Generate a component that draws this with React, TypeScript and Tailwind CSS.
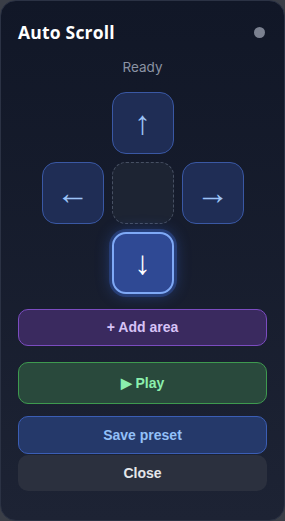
import React from 'react';

const PAD = "w-[62px] h-[62px] rounded-[14px] flex items-center justify-center text-[33px] leading-none pb-[2px]";

export default function App() {
  return (
    <div className="w-[285px] h-[521px] bg-[#3a3e47]" style={{ fontFamily: 'Inter, "Noto Sans", sans-serif' }}>
      <div className="w-full h-full rounded-[16px] border border-[#2b3244] bg-gradient-to-b from-[#111727] to-[#1d2334] flex flex-col px-[17px] pt-[20px]">
        {/* Header */}
        <div className="flex items-center justify-between h-[22px]">
          <h1 className="text-[17.5px] font-bold text-white tracking-[0.2px]" style={{ fontFamily: '"Open Sans", sans-serif' }}>Auto Scroll</h1>
          <span className="w-[11px] h-[11px] rounded-full bg-[#7b8190] mr-[2px]"></span>
        </div>
        <p className="text-center text-[13.5px] text-[#8b93a3] mt-[14px]">Ready</p>

        {/* D-pad */}
        <div className="mt-[15px] grid grid-cols-[62px_62px_62px] gap-[8px] justify-center" style={{ fontFamily: '"Liberation Sans", sans-serif' }}>
          <div></div>
          <button className={`${PAD} bg-[#1f2d55] border-[1.5px] border-[#3a58a4] text-[#9cc3f7]`}>↑</button>
          <div></div>
          <button className={`${PAD} bg-[#1f2d55] border-[1.5px] border-[#3a58a4] text-[#9cc3f7]`}>←</button>
          <div className="w-[62px] h-[62px] rounded-[14px] border-[1.5px] border-dashed border-[#475063] bg-[#1d2433]"></div>
          <button className={`${PAD} bg-[#1f2d55] border-[1.5px] border-[#3a58a4] text-[#9cc3f7]`}>→</button>
          <div></div>
          <button className={`${PAD} bg-[#2f4994] border-[2px] border-[#7fa9f6] text-white shadow-[0_0_0_3px_rgba(59,100,200,0.35),0_0_16px_rgba(59,110,230,0.45)]`}>↓</button>
          <div></div>
        </div>

        {/* Actions */}
        <div className="mt-[15px] flex flex-col" style={{ fontFamily: '"Liberation Sans", Arial, sans-serif' }}>
          <button className="h-[37px] rounded-[10px] bg-[#3a2a5f] border-[1.5px] border-[#7b4cc0] text-[#d7c3f6] text-[14px] font-bold">+ Add area</button>
          <button className="mt-[16px] h-[42px] rounded-[10px] bg-[#29493c] border-[1.5px] border-[#3e9a4f] text-[#8bf0ad] text-[14px] font-bold">▶ Play</button>
          <button className="mt-[12px] h-[38px] rounded-[10px] bg-[#25396a] border-[1.5px] border-[#3b5eb5] text-[#93c0f8] text-[14px] font-bold">Save preset</button>
          <button className="mt-[1px] h-[36px] rounded-[10px] bg-[#2b303e] text-[#e4e6ea] text-[14px] font-bold">Close</button>
        </div>
      </div>
    </div>
  );
}
